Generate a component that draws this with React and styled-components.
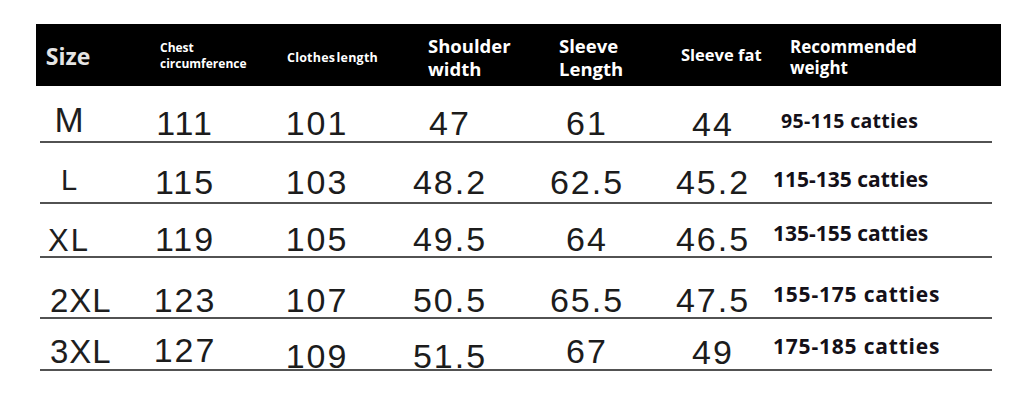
import React from "react";
import styled, { createGlobalStyle } from "styled-components";

const Global = createGlobalStyle`
  html, body { margin: 0; padding: 0; background: #fff; }
  body { width: 1024px; height: 408px; overflow: hidden; }
`;

const COLS = "76px 138px 126px 140px 134px 118px 220px";

const Page = styled.div`
  padding: 24px 0 0 36px;
`;

const Header = styled.div`
  display: grid;
  grid-template-columns: ${COLS};
  width: 965px;
  height: 62px;
  box-sizing: border-box;
  padding-left: 4px;
  background: #000;
  align-items: start;
`;

const HeadCell = styled.div`
  font-family: "Open Sans", "Liberation Sans", sans-serif;
  font-weight: 700;
  color: ${(p) => p.$color || "#fff"};
  font-size: ${(p) => p.$fs}px;
  line-height: ${(p) => p.$lh}px;
  padding-top: ${(p) => p.$top}px;
  padding-left: ${(p) => p.$pl || 0}px;
  padding-right: ${(p) => p.$pr || 0}px;
  text-align: ${(p) => p.$align || "left"};
  letter-spacing: ${(p) => p.$ls || 0}px;
  word-spacing: ${(p) => p.$ws || 0}px;
  white-space: nowrap;
`;

const Body = styled.div`
  margin-left: 4px;
  width: 952px;
`;

const Row = styled.div`
  display: grid;
  grid-template-columns: ${COLS};
  height: ${(p) => p.$h}px;
  box-sizing: border-box;
  border-bottom: 2px solid #525252;
  align-items: end;
`;

const SizeCell = styled.div`
  font-family: "Liberation Sans", Arial, sans-serif;
  color: #1e1e1e;
  font-size: ${(p) => p.$fs}px;
  letter-spacing: ${(p) => p.$ls || 0}px;
  line-height: 1;
  text-align: center;
  padding-right: 20px;
  padding-left: ${(p) => p.$pl || 0}px;
  padding-bottom: ${(p) => p.$pb || 0}px;
  white-space: nowrap;
`;

const NumCell = styled.div`
  font-family: "Liberation Sans", Arial, sans-serif;
  color: #1c1c1c;
  font-size: 34px;
  letter-spacing: 2px;
  line-height: 1;
  text-align: center;
  padding-bottom: ${(p) => Math.max(p.$pb || 0, 0)}px;
  margin-bottom: ${(p) => Math.min(p.$pb || 0, 0)}px;
  white-space: nowrap;
`;

const WeightCell = styled.div`
  font-family: "Open Sans", "Liberation Sans", sans-serif;
  font-weight: 700;
  color: #141018;
  font-size: ${(p) => p.$fs}px;
  letter-spacing: ${(p) => p.$ls || 0}px;
  line-height: 1;
  padding-left: ${(p) => p.$pl || 0}px;
  padding-bottom: ${(p) => p.$pb || 0}px;
  white-space: nowrap;
`;

const headers = [
  { lines: ["Size"], fs: 23, lh: 28, top: 18, align: "center", pr: 20, color: "#e4e4e4" },
  { lines: ["Chest", "circumference"], fs: 12, lh: 16, top: 16, pl: 44 },
  { lines: ["Clothes length"], fs: 12.5, lh: 16, top: 26, pl: 33, ls: 0.2, ws: -2 },
  { lines: ["Shoulder", "width"], fs: 18.5, lh: 23, top: 10, pl: 48 },
  { lines: ["Sleeve", "Length"], fs: 18.5, lh: 23, top: 10, pl: 39 },
  { lines: ["Sleeve fat"], fs: 16.5, lh: 20, top: 21, pl: 27 },
  { lines: ["Recommended", "weight"], fs: 17, lh: 21, top: 12, pl: 18 },
];

const rows = [
  {
    h: 57,
    size: { t: "M", fs: 35, pb: 4.5, pl: 2 },
    nums: [["111", 1], ["101", 1], ["47", 1], ["61", 1], ["44", 0.5]],
    w: { t: "95-115 catties", fs: 19.5, ls: 0.3, pl: 9, pb: 11 },
  },
  {
    h: 61,
    size: { t: "L", fs: 29, pb: 7.5, pl: 2 },
    nums: [["115", 3], ["103", 3], ["48.2", 3], ["62.5", 3], ["45.2", 3]],
    w: { t: "115-135 catties", fs: 21, pl: 1, pb: 12.5 },
  },
  {
    h: 54,
    size: { t: "XL", fs: 31, ls: 2, pb: 0.5, pl: 2 },
    nums: [["119", 0], ["105", 0], ["49.5", 0], ["64", 0], ["46.5", 0]],
    w: { t: "135-155 catties", fs: 21, pl: 1, pb: 12.5 },
  },
  {
    h: 61,
    size: { t: "2XL", fs: 33, ls: 1, pb: 0, pl: 10 },
    nums: [["123", 0], ["107", 0], ["50.5", 0], ["65.5", 0], ["47.5", 0]],
    w: { t: "155-175 catties", fs: 21, ls: 0.8, pl: 1, pb: 12.5 },
  },
  {
    h: 52,
    size: { t: "3XL", fs: 33, ls: 1, pb: 1.3, pl: 10 },
    nums: [["127", 2], ["109", -4], ["51.5", -4], ["67", 1.3], ["49", 0.5]],
    w: { t: "175-185 catties", fs: 21, ls: 0.8, pl: 1, pb: 11.6 },
  },
];

export default function App() {
  return (
    <>
      <Global />
      <Page>
        <Header>
          {headers.map((h, i) => (
            <HeadCell
              key={i}
              $fs={h.fs}
              $lh={h.lh}
              $top={h.top}
              $pl={h.pl}
              $pr={h.pr}
              $align={h.align}
              $color={h.color}
              $ls={h.ls}
              $ws={h.ws}
            >
              {h.lines.map((l, j) => (
                <div key={j}>{l}</div>
              ))}
            </HeadCell>
          ))}
        </Header>
        <Body>
          {rows.map((r, i) => (
            <Row key={i} $h={r.h}>
              <SizeCell $fs={r.size.fs} $ls={r.size.ls} $pb={r.size.pb} $pl={r.size.pl}>
                {r.size.t}
              </SizeCell>
              {r.nums.map(([n, pb], j) => (
                <NumCell key={j} $pb={pb}>
                  {n}
                </NumCell>
              ))}
              <WeightCell $fs={r.w.fs} $ls={r.w.ls} $pl={r.w.pl} $pb={r.w.pb}>
                {r.w.t}
              </WeightCell>
            </Row>
          ))}
        </Body>
      </Page>
    </>
  );
}
